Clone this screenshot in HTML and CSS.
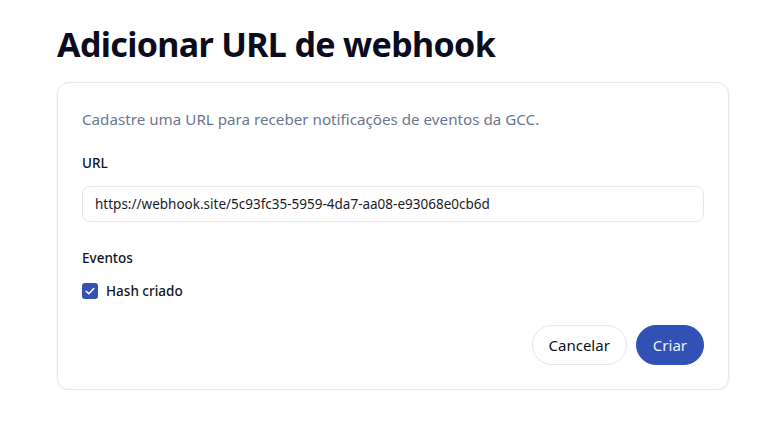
FILE: index.html
```html
<!DOCTYPE html>
<html lang="pt-BR">
<head>
<meta charset="utf-8">
<title>Adicionar URL de webhook</title>
<link rel="stylesheet" href="styles.css">
</head>
<body>
<main class="page">
  <h1 class="title">Adicionar URL de webhook</h1>
  <section class="card">
    <p class="desc">Cadastre uma URL para receber notificações de eventos da GCC.</p>
    <label class="label" for="url">URL</label>
    <input class="input" id="url" type="text" value="https://webhook.site/5c93fc35-5959-4da7-aa08-e93068e0cb6d">
    <div class="label events">Eventos</div>
    <label class="check-row">
      <span class="checkbox">
        <svg viewBox="0 0 16 16" width="16" height="16"><path d="M4.2 8.3 6.8 10.8 11.8 5.6" fill="none" stroke="#fff" stroke-width="1.5" stroke-linecap="round" stroke-linejoin="round"/></svg>
      </span>
      <span class="check-text">Hash criado</span>
    </label>
    <div class="actions">
      <button class="btn btn-outline" type="button">Cancelar</button>
      <button class="btn btn-primary" type="button">Criar</button>
    </div>
  </section>
</main>
</body>
</html>
```
FILE: styles.css
```css
* { box-sizing: border-box; }
html, body { margin: 0; padding: 0; background: #ffffff; }
body {
  font-family: "Noto Sans", "DejaVu Sans", sans-serif;
  color: #0f1020;
}
.page {
  padding: 21px 28px 0 57px;
}
.title {
  margin: 0;
  font-size: 34px;
  line-height: 46px;
  font-weight: 700;
  color: #0b0c1e;
  letter-spacing: -0.65px;
}
.card {
  margin-top: 15px;
  border: 1px solid #e3e7ef;
  border-radius: 12px;
  box-shadow: 0 1px 3px rgba(15, 23, 42, 0.08);
  padding: 24px;
  display: flex;
  flex-direction: column;
  width: 672px;
}
.desc {
  margin: 0;
  font-size: 15.2px;
  line-height: 24px;
  color: #6b7790;
}
.label {
  display: block;
  margin-top: 22px;
  font-size: 13.5px;
  line-height: 20px;
  font-weight: 500;
  color: #111322;
}
.input {
  margin-top: 13px;
  height: 36px;
  width: 100%;
  border: 1px solid #e3e7ef;
  border-radius: 8px;
  padding: 0 12px;
  font-family: inherit;
  font-size: 13.5px;
  color: #1a1c2a;
  background: #fff;
  outline: none;
}
.events { margin-top: 26px; }
.check-row {
  margin-top: 13px;
  display: flex;
  align-items: center;
  gap: 8px;
  height: 20px;
}
.checkbox {
  width: 16px;
  height: 16px;
  border-radius: 3px;
  background: #3451b6;
  display: flex;
  align-items: center;
  justify-content: center;
}
.checkbox svg { display: block; }
.check-text {
  font-size: 13.5px;
  font-weight: 500;
  color: #111322;
}
.actions {
  margin-top: 24px;
  display: flex;
  justify-content: flex-end;
  gap: 9px;
}
.btn {
  height: 40px;
  border-radius: 20px;
  font-family: inherit;
  font-size: 15px;
  font-weight: 400;
  padding: 0 16px;
  cursor: pointer;
}
.btn-outline {
  background: #fff;
  border: 1px solid #e3e7ef;
  color: #0f1020;
}
.btn-primary {
  background: #3151b5;
  border: 1px solid #3151b5;
  color: #eef1ff;
}
```
